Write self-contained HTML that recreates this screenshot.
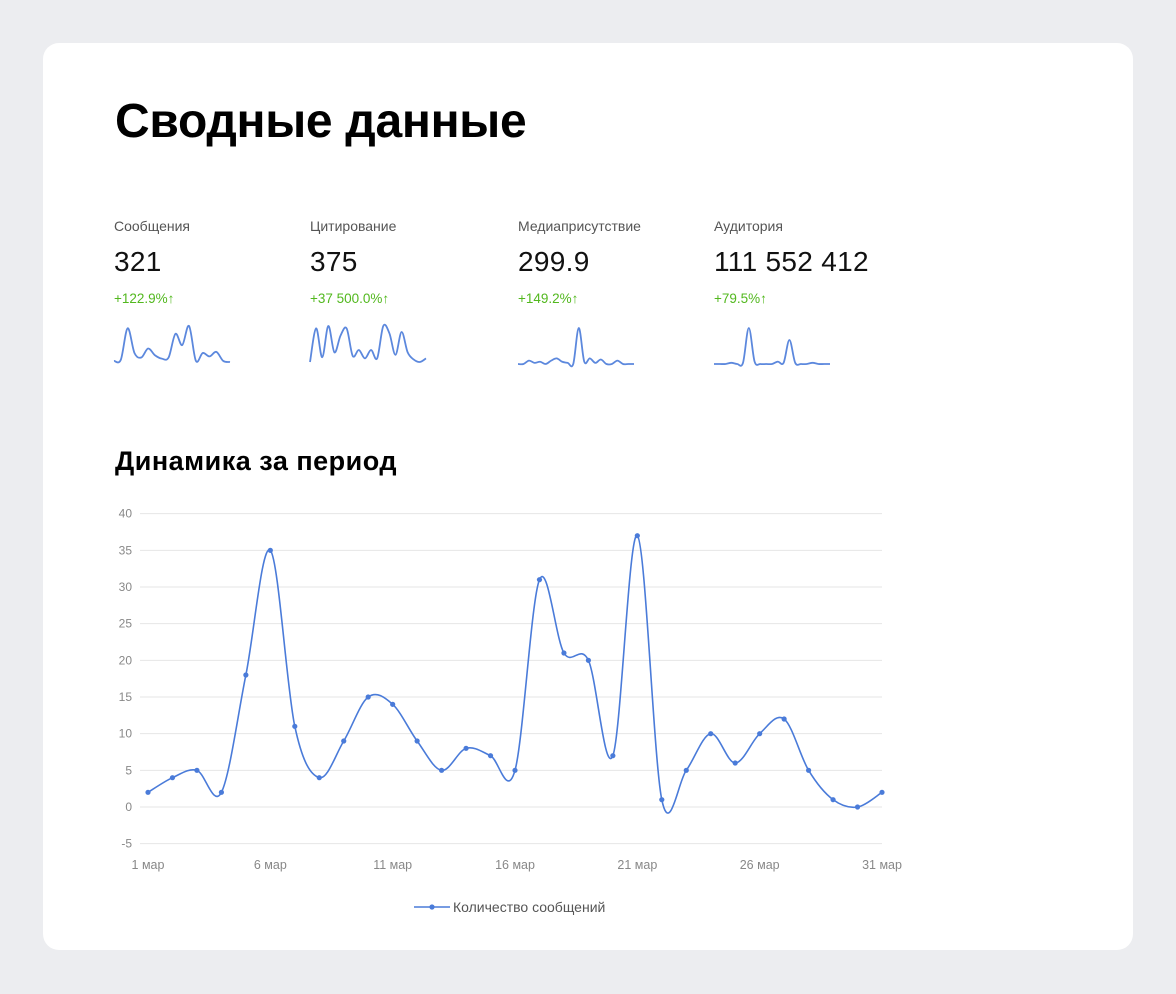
<!DOCTYPE html>
<html><head><meta charset="utf-8"><style>
body{margin:0;width:1176px;height:994px;background:#ecedf0;font-family:"Liberation Sans",sans-serif;position:relative;overflow:hidden}
.card{position:absolute;left:43px;top:43px;width:1090px;height:907px;background:#fff;border-radius:16px}
h1{position:absolute;left:115px;top:94px;margin:0;font-size:48px;font-weight:bold;color:#000;letter-spacing:-0.3px}
.m{position:absolute;top:218px}
.m .l{font-size:14px;color:#555}
.m .v{font-size:28px;color:#111;margin-top:12px;letter-spacing:0.3px}
.m .p{font-size:13.5px;color:#52b81e;margin-top:13px}
h2{position:absolute;left:115px;top:446px;margin:0;font-size:27px;font-weight:bold;color:#000;letter-spacing:0.5px}
svg text{font-family:"Liberation Sans",sans-serif}
</style></head><body>
<div class="card"></div>
<h1>Сводные данные</h1>
<div class="m" style="left:114px"><div class="l">Сообщения</div><div class="v">321</div><div class="p">+122.9%↑</div></div>
<div class="m" style="left:310px"><div class="l">Цитирование</div><div class="v">375</div><div class="p">+37 500.0%↑</div></div>
<div class="m" style="left:518px"><div class="l">Медиаприсутствие</div><div class="v">299.9</div><div class="p">+149.2%↑</div></div>
<div class="m" style="left:714px"><div class="l">Аудитория</div><div class="v">111 552 412</div><div class="p">+79.5%↑</div></div>
<h2>Динамика за период</h2>
<svg id="s" width="1176" height="994" style="position:absolute;left:0;top:0"></svg>
<script>
var s=document.getElementById('s'),h='';
function X(i){return 148+i*734/30}function Y(v){return 807-v*7.333}
for(var v=-5;v<=40;v+=5){var y=Y(v);h+='<line x1="140" x2="882" y1="'+y+'" y2="'+y+'" stroke="#e6e6e6"/><text x="132" y="'+(y+4)+'" font-size="12" fill="#888" text-anchor="end">'+v+'</text>';}
[1,6,11,16,21,26,31].forEach(function(d){h+='<text x="'+X(d-1)+'" y="869" font-size="12.5" fill="#888" text-anchor="middle">'+d+' мар</text>'});
function path(pts){var d='M'+pts[0][0]+','+pts[0][1];for(var i=0;i<pts.length-1;i++){var p0=pts[Math.max(0,i-1)],p1=pts[i],p2=pts[i+1],p3=pts[Math.min(pts.length-1,i+2)];d+='C'+(p1[0]+(p2[0]-p0[0])/6)+','+(p1[1]+(p2[1]-p0[1])/6)+' '+(p2[0]-(p3[0]-p1[0])/6)+','+(p2[1]-(p3[1]-p1[1])/6)+' '+p2[0]+','+p2[1];}return d}
var data=[2,4,5,2,18,35,11,4,9,15,14,9,5,8,7,5,31,21,20,7,37,1,5,10,6,10,12,5,1,0,2];
var pts=data.map(function(v,i){return[X(i),Y(v)]});
h+='<path d="'+path(pts)+'" fill="none" stroke="#4a7bd9" stroke-width="1.6"/>';
pts.forEach(function(p){h+='<circle cx="'+p[0]+'" cy="'+p[1]+'" r="2.6" fill="#4a7bd9"/>'});
h+='<line x1="414" x2="450" y1="907" y2="907" stroke="#4a7bd9" stroke-width="1.6"/><circle cx="432" cy="907" r="2.6" fill="#4a7bd9"/><text x="453" y="912" font-size="14" fill="#555">Количество сообщений</text>';
function spark(x0,base,arr){var w=116,n=arr.length,mx=Math.max.apply(null,arr);var p=arr.map(function(v,i){return[x0+i*w/(n-1),base-v/mx*36]});h+='<path d="'+path(p)+'" fill="none" stroke="#4a7bd9" stroke-width="1.8" opacity="0.9"/>';}
spark(114,362,[1,2,30,8,4,12,6,3,4,25,15,32,1,8,5,9,1,0]);
spark(310,362,[0,28,4,30,8,22,28,5,10,3,10,3,30,24,6,25,8,2,0,3]);
spark(518,364,[0,0,3,1,2,0,3,5,2,1,0,32,2,5,1,4,0,0,3,0,0,0]);
spark(714,364,[0,0,0,1,0,1,30,2,0,0,0,2,1,20,1,0,0,1,0,0,0]);
s.innerHTML=h;
</script>
</body></html>
